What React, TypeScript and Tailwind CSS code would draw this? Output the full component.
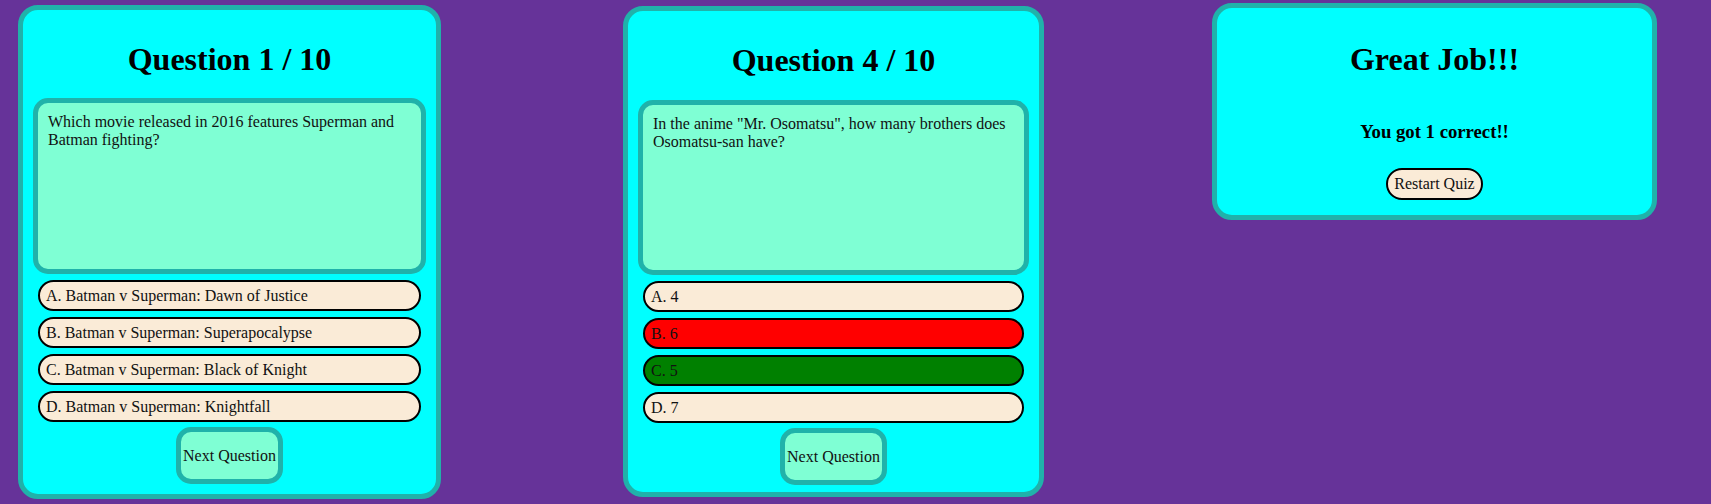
const serif = { fontFamily: '"Liberation Serif", "Times New Roman", serif' };

type Answer = { label: string; state?: 'wrong' | 'right' };

interface QuestionCardProps {
  number: number;
  question: string;
  answers: Answer[];
  cardClass: string;
  headClass: string;
  boxClass: string;
}

function QuestionCard({ number, question, answers, cardClass, headClass, boxClass }: QuestionCardProps) {
  return (
    <div className={`flex shrink-0 flex-col rounded-[20px] border-[5px] border-[#20b2aa] bg-[#00ffff] ${cardClass}`}>
      <h1 className={`text-center text-[32px] font-bold leading-[37px] text-black ${headClass}`}>
        Question {number} / 10
      </h1>

      {/* Question box */}
      <div className={`mx-[10px] rounded-[15px] border-[5px] border-[#20b2aa] bg-[#7fffd4] p-[10px] text-[16px] leading-[18px] text-[#111] ${boxClass}`}>
        {question}
      </div>

      {/* Answers */}
      <div className="mx-[15px] mt-[6px] flex flex-col gap-[6px]">
        {answers.map((a) => (
          <button
            key={a.label}
            className={`flex h-[31px] items-center rounded-full border-2 border-black px-[6px] text-left text-[16px] text-[#111] ${
              a.state === 'wrong' ? 'bg-[#ff0000]' : a.state === 'right' ? 'bg-[#008000]' : 'bg-[#faebd7]'
            }`}
          >
            {a.label}
          </button>
        ))}
      </div>

      <div className="mt-[5px] flex justify-center">
        <button className="flex h-[57px] w-[107px] items-center justify-center rounded-[15px] border-[5px] border-[#20b2aa] bg-[#7fffd4] text-[16px] text-[#111]">
          Next Question
        </button>
      </div>
    </div>
  );
}

export default function App() {
  return (
    <div className="flex min-h-screen w-full items-start bg-[#663399]" style={serif}>
      <QuestionCard
        number={1}
        question="Which movie released in 2016 features Superman and Batman fighting?"
        answers={[
          { label: 'A. Batman v Superman: Dawn of Justice' },
          { label: 'B. Batman v Superman: Superapocalypse' },
          { label: 'C. Batman v Superman: Black of Knight' },
          { label: 'D. Batman v Superman: Knightfall' },
        ]}
        cardClass="ml-[18px] mt-[5px] w-[423px] pt-[31px] pb-[10px]"
        headClass="mb-[20px]"
        boxClass="h-[176px]"
      />

      <QuestionCard
        number={4}
        question={'In the anime "Mr. Osomatsu", how many brothers does Osomatsu-san have?'}
        answers={[
          { label: 'A. 4' },
          { label: 'B. 6', state: 'wrong' },
          { label: 'C. 5', state: 'right' },
          { label: 'D. 7' },
        ]}
        cardClass="ml-[182px] mt-[6px] w-[421px] pt-[31px] pb-[7px]"
        headClass="mb-[21px]"
        boxClass="h-[175px]"
      />

      {/* Results */}
      <div className="ml-[168px] mt-[3px] flex w-[445px] shrink-0 flex-col items-center rounded-[20px] border-[5px] border-[#20b2aa] bg-[#00ffff] pt-[33px] pb-[15px]">
        <h1 className="text-[32px] font-bold leading-[37px] text-black">Great Job!!!</h1>
        <h3 className="mt-[43px] text-[18.72px] font-bold leading-[21px] text-black">You got 1 correct!!</h3>
        <button className="mt-[26px] flex h-[32px] items-center rounded-full border-2 border-black bg-[#faebd7] px-[6px] text-[16px] text-[#111]">
          Restart Quiz
        </button>
      </div>
    </div>
  );
}
